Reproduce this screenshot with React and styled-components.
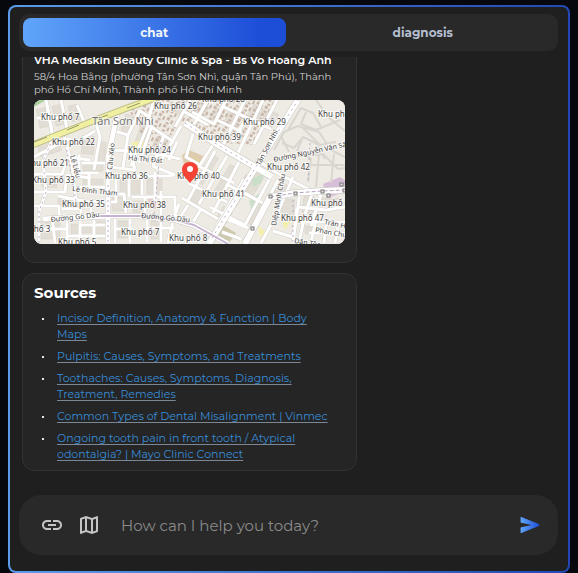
import React, { useState } from "react";
import styled, { createGlobalStyle } from "styled-components";
import { MdLink, MdOutlineMap } from "react-icons/md";

const GlobalStyle = createGlobalStyle`
    *, *::before, *::after {
        box-sizing: border-box;
    }

    body {
        margin: 0;
        background: #06080e;
        color: #fff;
        font-family: Montserrat, Inter, "Noto Sans", sans-serif;
    }

    button, input {
        font-family: inherit;
    }
`;

const Page = styled.div`
    height: 100vh;
    padding: 5px 8px 0;
`;

const Panel = styled.main`
    display: flex;
    flex-direction: column;
    height: 100%;
    padding: 7px 10px 16px 9px;
    border: 2px solid transparent;
    border-radius: 8px;
    background:
        linear-gradient(#1f1f1f, #1f1f1f) padding-box,
        linear-gradient(to right, #5b9bea, #2348b5) border-box;
`;

const TabBar = styled.div`
    display: grid;
    grid-template-columns: 1fr 1fr;
    gap: 6px;
    flex-shrink: 0;
    padding: 4px;
    border-radius: 10px;
    background: #292929;
`;

const Tab = styled.button`
    height: 29px;
    padding: 0;
    border: 0;
    border-radius: 8px;
    font-size: 12px;
    font-weight: 700;
    cursor: pointer;
    color: ${({ $active }) => ($active ? "#f1f5f9" : "#b4bfd0")};
    background: ${({ $active }) =>
        $active ? "linear-gradient(to right, #60a5fa, #1d4ed8 90%)" : "transparent"};
`;

/* newest messages stay at the bottom, older ones go under the tabs */
const Messages = styled.section`
    display: flex;
    flex: 1;
    flex-direction: column;
    justify-content: flex-end;
    gap: 10px;
    min-height: 0;
    margin-top: 6px;
    padding-left: 3px;
    overflow: hidden;
`;

const Card = styled.article`
    flex-shrink: 0;
    width: 62%;
    min-width: 335px;
    max-width: 480px;
    padding: ${({ $padding }) => $padding};
    border: 1px solid #333;
    border-radius: 12px;
    background: #252525;
`;

const ClinicName = styled.h3`
    margin: 0 0 2px;
    font-size: 11px;
    font-weight: 600;
    line-height: 16px;
`;

const Address = styled.p`
    margin: 0 0 4px;
    color: #d0d0d0;
    font-size: 10px;
    line-height: 13px;
`;

const MapImage = styled.svg`
    display: block;
    width: 100%;
    height: 144px;
    border-radius: 8px;
    background: #eeebe4;
    font-family: "Noto Sans", sans-serif;
`;

const SourcesTitle = styled.h2`
    margin: 0 0 7px;
    font-size: 15px;
    font-weight: 700;
    line-height: 20px;
`;

const SourceList = styled.ul`
    display: flex;
    flex-direction: column;
    gap: 6px;
    margin: 0;
    padding: 0;
    list-style: none;
`;

const SourceItem = styled.li`
    display: grid;
    grid-template-columns: 15px 1fr;
    padding-left: 8px;
    font-size: 11px;
    line-height: 16px;

    &::before {
        content: "";
        width: 2px;
        height: 2px;
        margin-top: 8px;
        background: #e5e5e5;
    }
`;

const SourceLink = styled.a`
    color: #378dd8;
    text-decoration: underline;
    text-decoration-color: #7b8794;
    text-underline-offset: 2px;
`;

const Composer = styled.form`
    display: flex;
    align-items: center;
    gap: 13px;
    flex-shrink: 0;
    height: 60px;
    margin-top: 24px;
    padding: 0 16px 0 21px;
    border-radius: 22px;
    background: #292929;
`;

const IconButton = styled.button`
    display: flex;
    flex-shrink: 0;
    padding: 0;
    border: 0;
    background: none;
    color: #c4c4c4;
    cursor: pointer;
`;

const MessageInput = styled.input`
    flex: 1;
    min-width: 0;
    padding: 0 7px;
    border: 0;
    outline: 0;
    background: transparent;
    color: #eee;
    font-size: 15px;

    &::placeholder {
        color: #8b8b8b;
        opacity: 1;
    }
`;

const sources = [
    { title: "Incisor Definition, Anatomy & Function | Body Maps", href: "#incisor" },
    { title: "Pulpitis: Causes, Symptoms, and Treatments", href: "#pulpitis" },
    { title: "Toothaches: Causes, Symptoms, Diagnosis, Treatment, Remedies", href: "#toothaches" },
    { title: "Common Types of Dental Misalignment | Vinmec", href: "#misalignment" },
    { title: "Ongoing tooth pain in front tooth / Atypical odontalgia? | Mayo Clinic Connect", href: "#tooth-pain" },
];

/* x, y, text, rotation */
const districts = [
    [7, 20, "Khu phố 7"],
    [18, 45, "Khu phố 22"],
    [-8, 66, "Khu phố 21"],
    [-2, 83, "Khu phố 33"],
    [28, 107, "Khu phố 35"],
    [-22, 132, "Khu phố 3"],
    [24, 145, "Khu phố 5"],
    [120, 9, "Khu phố 26"],
    [168, 2, "Khu phố 28"],
    [94, 53, "Khu phố 24"],
    [71, 79, "Khu phố 36"],
    [89, 108, "Khu phố 38"],
    [87, 135, "Khu phố 7"],
    [135, 141, "Khu phố 8"],
    [164, 40, "Khu phố 39"],
    [209, 25, "Khu phố 29"],
    [143, 79, "Khu phố 40"],
    [168, 97, "Khu phố 41"],
    [233, 70, "Khu phố 42"],
    [284, 17, "Khu phố 43"],
    [277, 106, "Khu phố 46"],
    [247, 121, "Khu phố 47"],
];

const streets = [
    [36, 56, "Lê Liễu", 75],
    [78, 70, "Cầu Xéo", -84],
    [38, 91, "Lê Đình Thám", 6],
    [94, 60, "Hà Thị Đát", 5],
    [17, 122, "Đường Gò Dầu", -6],
    [107, 118, "Đường Gò Dầu", 5],
    [226, 66, "Tân Sơn Nhì", -62],
    [240, 62, "Đường Nguyễn Văn Săng", -12],
    [242, 126, "Diệp Minh Châu", -80],
    [290, 124, "Trần Hưng", 12],
    [281, 132, "Phan Chu", 10],
    [260, 143, "Dân Tộc", 9],
];

const lanes = [
    "M0 57L34 39L42 42L61 31M0 74H28L34 57L56 60M0 92H31L33 75L57 78M0 106H25V116M5 143V112L12 92L9 61L19 38L12 0",
    "M18 116L21 143M33 118V143M46 117V143M60 116V143M8 129H32M34 136H72M47 125H73M24 96L55 102L73 101M28 109H47V118M57 100V116",
    "M30 35L38 65L42 101M45 55V73H64M48 63H72M44 87H73M55 73V88M13 5L18 31M27 0L33 29M43 5L51 24M3 18H29",
    "M62 23L66 37L60 70M80 31L94 35L89 67M94 35L106 10M78 50L96 51L101 70L76 67M73 76H139M82 77V102H74M95 78V97M108 73V95M121 72V101",
    "M75 94H90L92 114M98 97H141V117M111 97V114M127 91V118M81 116V143M96 116V143M113 118V142M127 119V142M139 121L134 143M82 129H99M113 128H140",
    "M106 11L117 18L97 66M120 0L113 24L140 42M117 28L105 63M130 35L119 66L141 75M143 42L135 60M147 26L127 61M116 52L146 59",
    "M156 0L141 27M174 0L158 28M192 0L180 24L158 12M211 0L188 47M229 0L204 53M243 0L220 44M151 12L174 25M183 20L208 32M190 7L237 29M199 42L213 16",
    "M159 34L152 57L166 65L180 43M181 51L153 102M193 56L165 104M205 62L179 113M164 66L200 83M154 83L193 102M148 98L184 119M145 104L139 121",
    "M154 105L145 119M167 109L158 124M176 107L211 125M192 84L229 103M210 79L182 127M199 105L193 119M193 119L214 128M188 132L207 139",
    "M226 62L243 73L286 95M236 78L211 125M259 77L244 112M244 80L229 109M223 100L211 93M245 110L227 143M239 131L259 137L263 108M266 91L259 143",
    "M279 91L271 114L265 143M288 91L277 126M264 107L292 110L311 107M267 122H311M282 119L277 143M293 118L290 143M305 122L301 143M275 133H311",
];

const estateLanes = [
    "M240 50L250 32L264 26L285 32L297 50L311 57M248 43L260 48L269 37L282 43L291 59M254 30L267 8L279 13L287 27",
    "M272 12L267 24L282 30L306 20M263 50L277 59L274 82M258 57L289 54L304 69L311 68M285 54L282 87M300 54L297 83M276 65H311",
    "M282 0L294 17L311 31M268 39L263 51M269 28L286 45L302 42M247 36L255 52",
];

const blocks = [
    [4, 8, 12, 19, -12], [20, 5, 10, 20, -12], [36, 5, 9, 16, -14], [4, 40, 22, 14, -18],
    [48, 36, 12, 18, 4], [62, 42, 9, 22, 6], [8, 76, 15, 11, 4], [49, 62, 20, 9, 2],
    [49, 79, 20, 8, 2], [24, 98, 27, 8, 5], [7, 121, 19, 18, 0], [37, 124, 20, 9, -2],
    [61, 121, 10, 17, 0], [86, 80, 20, 14, 0], [113, 79, 15, 15, 0], [78, 97, 12, 14, 0],
    [99, 101, 11, 12, 0], [84, 121, 10, 17, 0], [117, 121, 9, 18, 0], [89, 15, 10, 18, 15],
    [103, 26, 9, 22, 20], [119, 38, 12, 16, 24], [141, 4, 12, 10, 28], [160, 4, 13, 11, 28],
    [178, 9, 10, 12, 28], [192, 13, 14, 13, 26], [216, 6, 12, 14, 28], [230, 11, 12, 14, 28],
    [169, 54, 8, 31, 31], [187, 64, 8, 34, 31], [203, 74, 8, 33, 31], [217, 70, 8, 29, 31],
    [241, 82, 10, 12, 29], [158, 88, 10, 15, 30], [185, 108, 11, 14, 30], [219, 101, 9, 26, 31],
    [248, 99, 12, 21, 4], [269, 97, 11, 16, 8], [288, 98, 18, 8, 0], [271, 126, 11, 8, 0],
];

const ClinicMap = () => (
    <MapImage viewBox="0 0 311 144" preserveAspectRatio="xMidYMid slice" role="img" aria-label="Map">
        <defs>
            <pattern id="houses" width="9" height="8" patternUnits="userSpaceOnUse" patternTransform="rotate(28)">
                <path d="M0 0h3v3H0zM5 1h2v4H5zM1 5h3v2H1z" fill="#c9b6a8" />
            </pattern>
        </defs>
        <rect width="311" height="144" fill="#eeebe4" />
        <path d="M0 0H12L0 7Z" fill="#a9cf9b" />
        <g fill="#e2ded6" stroke="#d4cfc6" strokeWidth="0.5">
            {blocks.map(([x, y, w, h, angle]) => (
                <rect
                    key={`${x}-${y}`}
                    x={x}
                    y={y}
                    width={w}
                    height={h}
                    transform={`rotate(${angle} ${x + w / 2} ${y + h / 2})`}
                />
            ))}
        </g>
        <path d="M95 10L120 0H245L220 45L185 43L145 22L130 48L113 45Z" fill="url(#houses)" />
        <path d="M218 79L230 73L227 83L219 87ZM215 101L226 93L225 101L218 111Z" fill="#c9dfc8" />
        <path d="M97 43L110 39L113 48L100 53ZM156 57L168 60L164 72L153 69ZM224 126L232 132L226 137ZM248 122L257 121L251 130Z" fill="#f5efad" />
        <path d="M148 55L155 50L172 57L164 70L150 65Z" fill="#d2b98b" opacity="0.6" />
        <path d="M187 124L202 133L195 143L182 135Z" fill="#cfc9ad" />
        <path d="M289 84L306 77L311 80V92L293 98Z" fill="#d7bed8" />
        <path d="M114 96H122V108H114Z" fill="#e8cbc7" />
        <g fill="none" stroke="#d5d1ca" strokeWidth="4" strokeLinejoin="round">
            {lanes.map((d) => <path key={d} d={d} />)}
        </g>
        <g fill="none" stroke="#fff" strokeWidth="3" strokeLinejoin="round">
            {lanes.map((d) => <path key={d} d={d} />)}
        </g>
        <g fill="none" stroke="#d9d6d0" strokeWidth="2" strokeLinejoin="round">
            {estateLanes.map((d) => <path key={d} d={d} />)}
        </g>
        <g fill="none" strokeLinejoin="round">
            <path d="M84 10L74 58V143M9 119L76 116L106 116L142 120L160 125L178 135L194 144" stroke="#cbc7c1" strokeWidth="6" />
            <path d="M84 10L74 58V143M9 119L76 116L106 116L142 120L160 125L178 135L194 144" stroke="#fff" strokeWidth="5" />
            <path d="M151 23L184 45L218 65L238 77M175 144L223 65L264 0M211 144L236 97L261 93L288 91L311 90" stroke="#c9c5bf" strokeWidth="7" />
            <path d="M151 23L184 45L218 65L238 77M175 144L223 65L264 0M211 144L236 97L261 93L288 91L311 90" stroke="#fff" strokeWidth="6" />
            <path d="M-2 45L59 21L93 8L124 -3" stroke="#bfc08b" strokeWidth="7" />
            <path d="M-2 45L59 21L93 8L124 -3" stroke="#f0f0a0" strokeWidth="5" />
            <path d="M66 116H106L142 120L160 125L178 135L194 144" stroke="#c5b3cf" strokeWidth="2" />
            <path d="M236 97L261 93L288 91L311 90" stroke="#b9a2bf" strokeDasharray="4 2" />
            <path d="M151 23L184 45L218 65M178 138L223 65L264 0" stroke="#b9adc3" strokeDasharray="2 4" />
            <path d="M5 143V112L12 92L9 61L19 38M74 85V143M127 42L120 116M276 43L274 82M259 100V143M30 35L42 101" stroke="#bda9c4" strokeDasharray="2 3" />
        </g>
        <path d="M0 42L13 37M33 30L45 25M62 19L74 15M93 8L106 3" stroke="#93996b" strokeWidth="1" />
        <g fill="#e9e5e5" stroke="#777" strokeWidth="1">
            {[[235, 95], [260, 92], [287, 90], [217, 127], [293, 94], [306, 83], [309, 89]].map(([x, y]) => (
                <rect key={`${x}-${y}`} x={x} y={y} width="3" height="3" />
            ))}
        </g>
        <text x="58" y="25" fontSize="11" fill="#777" stroke="#fff" strokeWidth="2" strokeOpacity="0.6" paintOrder="stroke">
            Tân Sơn Nhì
        </text>
        <g fontSize="8" fill="#454545" stroke="#fff" strokeWidth="2" strokeOpacity="0.7" paintOrder="stroke">
            {districts.map(([x, y, name]) => (
                <text key={`${x}-${y}`} x={x} y={y}>{name}</text>
            ))}
        </g>
        <g fontSize="7" fill="#454545" stroke="#fff" strokeWidth="2" strokeOpacity="0.7" paintOrder="stroke">
            {streets.map(([x, y, name, angle]) => (
                <text key={`${x}-${y}`} x={x} y={y} transform={`rotate(${angle} ${x} ${y})`}>{name}</text>
            ))}
        </g>
        <path d="M156 62C151 62 148 65 148 70C148 75 153 79 156 83C159 79 164 75 164 70C164 65 161 62 156 62Z" fill="#f44336" />
        <circle cx="156" cy="69" r="3" fill="#fff" />
    </MapImage>
);

const SendIcon = () => (
    <svg width="24" height="24" viewBox="0 0 24 24" aria-hidden="true">
        <defs>
            <linearGradient id="send" x1="0" x2="1">
                <stop offset="0" stopColor="#60a5fa" />
                <stop offset="1" stopColor="#1d4ed8" />
            </linearGradient>
        </defs>
        <path
            d="M3.3 3.9L20.8 11.1Q22 12 20.8 12.9L3.3 20.1Q2.6 20.4 2.6 19.6V15Q2.6 14.4 3.3 14.2L13.5 12L3.3 9.8Q2.6 9.6 2.6 9V4.4Q2.6 3.6 3.3 3.9Z"
            fill="url(#send)"
        />
    </svg>
);

const App = () => {
    const [tab, setTab] = useState("chat");
    const [message, setMessage] = useState("");

    const handleSubmit = (e) => {
        e.preventDefault();
        setMessage("");
    };

    return (
        <Page>
            <GlobalStyle />
            <Panel>
                <TabBar role="tablist">
                    {["chat", "diagnosis"].map((name) => (
                        <Tab
                            key={name}
                            type="button"
                            role="tab"
                            aria-selected={tab === name}
                            $active={tab === name}
                            onClick={() => setTab(name)}
                        >
                            {name}
                        </Tab>
                    ))}
                </TabBar>
                <Messages>
                    <Card $padding="11px 11px 18px">
                        <ClinicName>VHA Medskin Beauty Clinic &amp; Spa - Bs Võ Hoàng Anh</ClinicName>
                        <Address>
                            58/4 Hoa Bằng (phường Tân Sơn Nhì, quận Tân Phú), Thành phố Hồ Chí Minh, Thành phố Hồ Chí Minh
                        </Address>
                        <ClinicMap />
                    </Card>
                    <Card $padding="9px 20px 8px 11px">
                        <SourcesTitle>Sources</SourcesTitle>
                        <SourceList>
                            {sources.map(({ title, href }) => (
                                <SourceItem key={href}>
                                    <span>
                                        <SourceLink href={href}>{title}</SourceLink>
                                    </span>
                                </SourceItem>
                            ))}
                        </SourceList>
                    </Card>
                </Messages>
                <Composer onSubmit={handleSubmit}>
                    <IconButton type="button" aria-label="Attach link">
                        <MdLink size={24} />
                    </IconButton>
                    <IconButton type="button" aria-label="Open map">
                        <MdOutlineMap size={24} />
                    </IconButton>
                    <MessageInput
                        type="text"
                        aria-label="Message"
                        placeholder="How can I help you today?"
                        value={message}
                        onChange={(e) => setMessage(e.target.value)}
                    />
                    <IconButton type="submit" aria-label="Send">
                        <SendIcon />
                    </IconButton>
                </Composer>
            </Panel>
        </Page>
    );
};

export default App;
